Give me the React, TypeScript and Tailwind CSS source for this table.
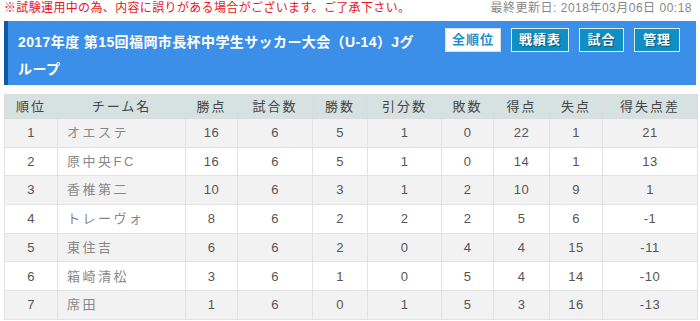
import React from "react";

const rows = [
  ["1", "オエステ", "16", "6", "5", "1", "0", "22", "1", "21"],
  ["2", "原中央FC", "16", "6", "5", "1", "0", "14", "1", "13"],
  ["3", "香椎第二", "10", "6", "3", "1", "2", "10", "9", "1"],
  ["4", "トレーヴォ", "8", "6", "2", "2", "2", "5", "6", "-1"],
  ["5", "東住吉", "6", "6", "2", "0", "4", "4", "15", "-11"],
  ["6", "箱崎清松", "3", "6", "1", "0", "5", "4", "14", "-10"],
  ["7", "席田", "1", "6", "0", "1", "5", "3", "16", "-13"],
];

const heads = ["順位", "チーム名", "勝点", "試合数", "勝数", "引分数", "敗数", "得点", "失点", "得失点差"];
const widths = [53, 128, 52, 75, 55, 74, 52, 56, 53, 95];

export default function App() {
  const font = { fontFamily: '"Liberation Sans", Arial, "Noto Sans CJK JP", sans-serif' };
  return (
    <div className="w-[700px] h-[321px] bg-white overflow-hidden px-[4px]" style={font}>
      <div className="flex justify-between items-center h-[17px] text-[12px] leading-[17px]">
        <span className="text-[#e8141b] tracking-[0.35px]">※試験運用中の為、内容に誤りがある場合がございます。ご了承下さい。</span>
        <span className="text-[#888] mr-[4px] tracking-[0.5px]">最終更新日: 2018年03月06日 00:18</span>
      </div>
      <div className="mt-[4px] w-[692px] h-[64px] bg-[#3b8fe8] border-l-[4px] border-[#0e5aa6] flex">
        <div className="w-[420px] shrink-0 pl-[10px] pt-[8px] text-white font-bold text-[14px] leading-[27px] tracking-[0.4px]">
          2017年度 第15回福岡市長杯中学生サッカー大会（U-14）Jグループ
        </div>
        <div className="flex-1 flex justify-end items-start pt-[7px] pr-[16px] gap-[10px]">
          <div className="h-[24px] w-[56px] bg-white border border-[#ddd] text-[#1e8fd0] font-bold text-[13px] flex items-center justify-center tracking-[1px]">全順位</div>
          <div className="h-[24px] w-[58px] bg-[#0f8fc4] border border-[#d8eef8] text-white font-bold text-[13px] flex items-center justify-center tracking-[1px] [text-shadow:1px_1px_1px_#05506f]">戦績表</div>
          <div className="h-[24px] w-[45px] bg-[#0f8fc4] border border-[#d8eef8] text-white font-bold text-[13px] flex items-center justify-center tracking-[1px] [text-shadow:1px_1px_1px_#05506f]">試合</div>
          <div className="h-[24px] w-[46px] bg-[#0f8fc4] border border-[#d8eef8] text-white font-bold text-[13px] flex items-center justify-center tracking-[1px] [text-shadow:1px_1px_1px_#05506f]">管理</div>
        </div>
      </div>
      <table className="mt-[9px] w-[693px] border-collapse text-[13px] table-fixed">
        <colgroup>
          {widths.map((w, i) => (
            <col key={i} style={{ width: w }} />
          ))}
        </colgroup>
        <thead>
          <tr className="bg-[#d6e1e1] h-[24px]">
            {heads.map((h) => (
              <th key={h} className="border border-[#dcdcdc] font-normal text-[#444] tracking-[2px] text-center p-0">
                {h}
              </th>
            ))}
          </tr>
        </thead>
        <tbody>
          {rows.map((r, i) => (
            <tr key={i} className={(i % 2 === 0 ? "bg-[#f2f2f2]" : "bg-white") + " h-[28.7px]"}>
              {r.map((c, j) => (
                <td
                  key={j}
                  className={
                    "border border-[#e2e2e2] p-0 " +
                    (j === 1 ? "text-left pl-[9px] text-[#888] tracking-[2.5px]" : "text-center text-[#555] tracking-[0.5px]")
                  }
                >
                  {c}
                </td>
              ))}
            </tr>
          ))}
        </tbody>
      </table>
    </div>
  );
}
